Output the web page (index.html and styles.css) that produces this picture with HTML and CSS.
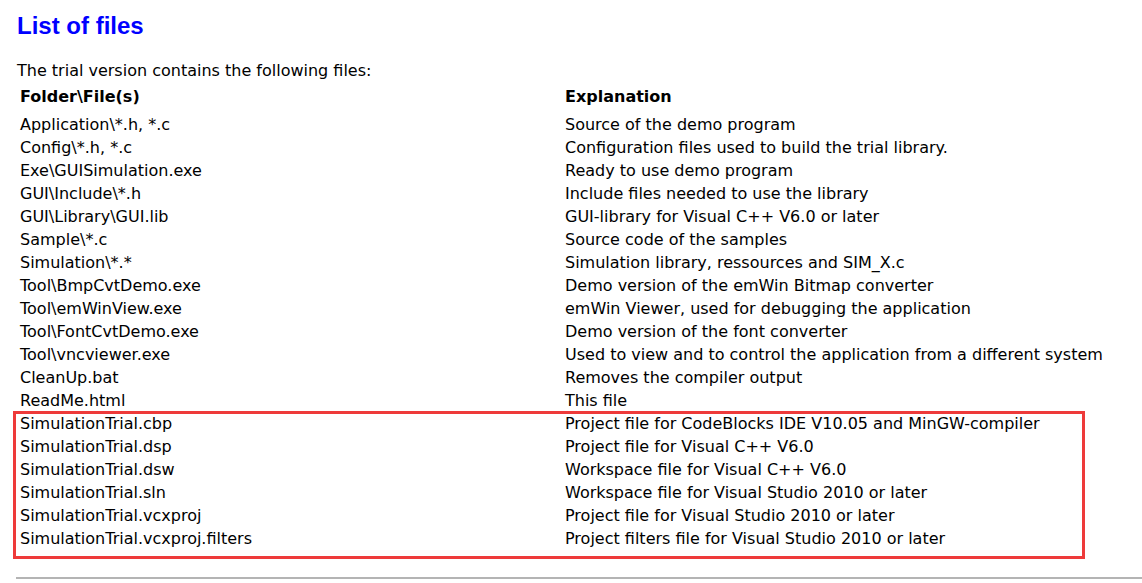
FILE: index.html
```html
<!DOCTYPE html>
<html>
<head>
<meta charset="utf-8">
<link rel="stylesheet" href="styles.css">
</head>
<body>
<h2 class="title">List of files</h2>
<p class="intro">The trial version contains the following files:</p>
<div class="files">
  <div class="row head"><div class="c1">Folder\File(s)</div><div class="c2">Explanation</div></div>
  <div class="row"><div class="c1">Application\*.h, *.c</div><div class="c2">Source of the demo program</div></div>
  <div class="row"><div class="c1">Config\*.h, *.c</div><div class="c2">Configuration files used to build the trial library.</div></div>
  <div class="row"><div class="c1">Exe\GUISimulation.exe</div><div class="c2">Ready to use demo program</div></div>
  <div class="row"><div class="c1">GUI\Include\*.h</div><div class="c2">Include files needed to use the library</div></div>
  <div class="row"><div class="c1">GUI\Library\GUI.lib</div><div class="c2">GUI-library for Visual C++ V6.0 or later</div></div>
  <div class="row"><div class="c1">Sample\*.c</div><div class="c2">Source code of the samples</div></div>
  <div class="row"><div class="c1">Simulation\*.*</div><div class="c2">Simulation library, ressources and SIM_X.c</div></div>
  <div class="row"><div class="c1">Tool\BmpCvtDemo.exe</div><div class="c2">Demo version of the emWin Bitmap converter</div></div>
  <div class="row"><div class="c1">Tool\emWinView.exe</div><div class="c2">emWin Viewer, used for debugging the application</div></div>
  <div class="row"><div class="c1">Tool\FontCvtDemo.exe</div><div class="c2">Demo version of the font converter</div></div>
  <div class="row"><div class="c1">Tool\vncviewer.exe</div><div class="c2">Used to view and to control the application from a different system</div></div>
  <div class="row"><div class="c1">CleanUp.bat</div><div class="c2">Removes the compiler output</div></div>
  <div class="row"><div class="c1">ReadMe.html</div><div class="c2">This file</div></div>
  <div class="marked">
    <div class="row"><div class="c1">SimulationTrial.cbp</div><div class="c2">Project file for CodeBlocks IDE V10.05 and MinGW-compiler</div></div>
    <div class="row"><div class="c1">SimulationTrial.dsp</div><div class="c2">Project file for Visual C++ V6.0</div></div>
    <div class="row"><div class="c1">SimulationTrial.dsw</div><div class="c2">Workspace file for Visual C++ V6.0</div></div>
    <div class="row"><div class="c1">SimulationTrial.sln</div><div class="c2">Workspace file for Visual Studio 2010 or later</div></div>
    <div class="row"><div class="c1">SimulationTrial.vcxproj</div><div class="c2">Project file for Visual Studio 2010 or later</div></div>
    <div class="row"><div class="c1">SimulationTrial.vcxproj.filters</div><div class="c2">Project filters file for Visual Studio 2010 or later</div></div>
    <div class="mark-frame"></div>
  </div>
</div>
<hr class="rule">
</body>
</html>
```
FILE: styles.css
```css
html, body {
  margin: 0;
  padding: 0;
  background: #ffffff;
}
body {
  padding: 0 0 0 17px;
  font-family: "DejaVu Sans", Verdana, sans-serif;
  font-size: 16px;
  color: #000000;
}
.title {
  margin: 0;
  padding-top: 12px;
  font-family: "Liberation Sans", Arial, sans-serif;
  font-size: 24px;
  font-weight: bold;
  color: #0000ff;
  line-height: 28px;
}
.intro {
  margin: 0;
  padding-top: 22px;
  line-height: 18px;
}
.files {
  padding-top: 4px;
}
.row {
  display: grid;
  grid-template-columns: 545px 1fr;
  height: 23px;
  line-height: 23px;
  padding-left: 3px;
  white-space: nowrap;
}
.row.head {
  font-weight: bold;
  height: 29px;
  line-height: 26px;
}
.marked {
  position: relative;
  padding-bottom: 10px;
}
.mark-frame {
  position: absolute;
  left: -4px;
  top: -1px;
  width: 1066px;
  height: 142px;
  border: 3px solid #ee3a3a;
  pointer-events: none;
}
.rule {
  margin: 17px 0 0 -1px;
  border: 0;
  border-top: 2px solid #b4b4b4;
  height: 0;
}
```
